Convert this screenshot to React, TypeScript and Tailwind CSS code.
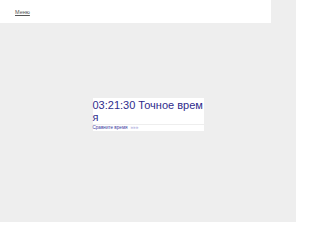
export default function App() {
  return (
    <div className="w-[296px] h-[246px] bg-white" style={{ fontFamily: '"Liberation Sans", Arial, sans-serif' }}>
      <div className="bg-[#eeeeee]">
        <header className="w-[271px] h-[23px] bg-white pl-[15px] pt-[9px] text-[5.5px] leading-[6px]">
          <a href="#" className="block w-fit text-[#555555] underline">
            Меню
          </a>
        </header>
      </div>
      <main className="h-[199px] bg-[#eeeeee] flex justify-center pt-[75px]">
        <div className="w-[111px] flex flex-col gap-[1px]">
          <h1 className="bg-white pt-[1px] pb-[1px] text-[11px] leading-[12px] font-normal text-[#2f2c8c] break-all">
            03:21:30 Точное время
          </h1>
          <div className="bg-white h-[6px] flex items-center gap-[3px] text-[4.6px] leading-[6px]">
            <span className="text-[#3a3aa0]">Сравните время</span>
            <span className="text-[#9a9ad6]">»»»</span>
          </div>
        </div>
      </main>
    </div>
  );
}
